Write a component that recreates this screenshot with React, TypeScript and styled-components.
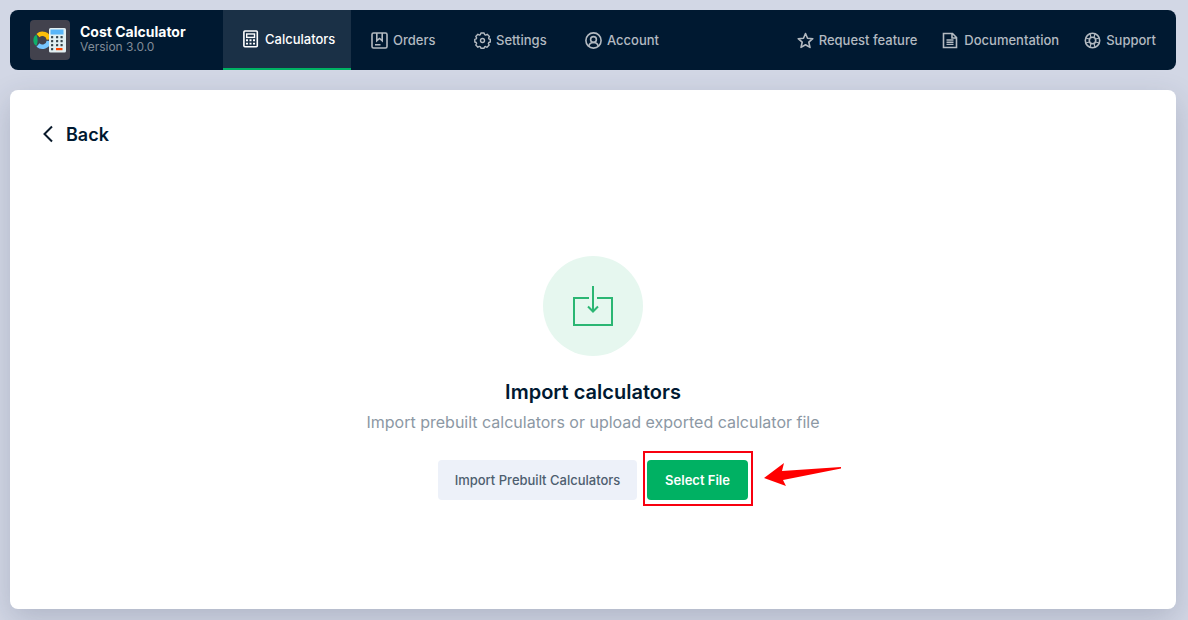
import React from "react";
import styled, { createGlobalStyle } from "styled-components";

const GlobalStyle = createGlobalStyle`
  * { box-sizing: border-box; }
  html { height: 100%; background: #d2d7e5; }
  body {
    min-height: 100%;
    margin: 0;
    font-family: Inter, "Liberation Sans", sans-serif;
    font-size: 13px;
    color: #001931;
  }
  #root { min-height: 100vh; display: flex; }
`;

const Page = styled.div`
  flex: 1;
  display: flex;
  flex-direction: column;
  gap: 20px;
  padding: 10px 12px 11px 10px;
`;

const Header = styled.header`
  display: flex;
  height: 60px;
  padding: 0 20px;
  background: #001931;
  border-radius: 8px;
`;

const Brand = styled.div`
  display: flex;
  align-items: center;
  gap: 10px;
  width: 193px;
`;

const BrandText = styled.div`
  display: flex;
  flex-direction: column;
  padding-bottom: 2px;
`;

const BrandName = styled.strong`
  font-size: 14px;
  line-height: 16px;
  font-weight: 700;
  color: #fff;
`;

const Version = styled.span`
  font-size: 12px;
  line-height: 14px;
  color: #808c98;
`;

const Tabs = styled.nav`
  display: flex;
`;

const NavLink = styled.a`
  display: flex;
  align-items: center;
  gap: 5px;
  font-weight: 500;
  line-height: 16px;
  text-decoration: none;
  white-space: nowrap;
  color: #b3bac1;
`;

const Tab = styled(NavLink)<{ $width: number; $active?: boolean }>`
  width: ${(p) => p.$width}px;
  padding-left: 20px;
  color: ${(p) => (p.$active ? "#fff" : "#b3bac1")};
  background: ${(p) => (p.$active ? "#1a3046" : "transparent")};
  border-bottom: ${(p) => (p.$active ? "2px solid #00b163" : "0")};
`;

const Links = styled.nav`
  display: flex;
  gap: 25px;
  margin-left: auto;
`;

const Card = styled.main`
  flex: 1;
  display: flex;
  flex-direction: column;
  padding: 32px;
  background: #fff;
  border-radius: 8px;
  box-shadow: 0 10px 30px rgba(40, 50, 80, 0.2);
`;

const BackButton = styled.button`
  align-self: flex-start;
  display: flex;
  align-items: center;
  gap: 12px;
  padding: 0;
  border: 0;
  background: none;
  font: 600 18px/26px Inter, "Liberation Sans", sans-serif;
  color: #001931;
`;

const ImportPanel = styled.section`
  flex: 1;
  display: flex;
  flex-direction: column;
  align-items: center;
  justify-content: center;
  padding-top: 30px;
`;

const Circle = styled.div`
  display: flex;
  align-items: center;
  justify-content: center;
  width: 100px;
  height: 100px;
  border-radius: 50%;
  background: #e6f7ef;
`;

const Title = styled.h1`
  margin: 24px 0 6px;
  font-size: 20px;
  line-height: 24px;
  font-weight: 600;
`;

const Subtitle = styled.p`
  margin: 0 0 26px;
  font-size: 16px;
  line-height: 24px;
  color: #8c98a4;
`;

const Actions = styled.div`
  display: flex;
  gap: 10px;
`;

const Button = styled.button<{ $primary?: boolean }>`
  height: 40px;
  min-width: ${(p) => (p.$primary ? "101px" : "199px")};
  padding: 0;
  border: 0;
  border-radius: 4px;
  font: ${(p) => (p.$primary ? 600 : 500)} 13px/16px Inter, "Liberation Sans", sans-serif;
  color: ${(p) => (p.$primary ? "#fff" : "#4d5e6f")};
  background: ${(p) => (p.$primary ? "#00b163" : "#edf1f9")};
`;

const Highlighted = styled.div`
  position: relative;
`;

const Frame = styled.span`
  position: absolute;
  inset: -9px -5px -6px -4px;
  border: 2px solid #f8000f;
  pointer-events: none;
`;

const Pointer = styled.svg`
  position: absolute;
  left: 116px;
  top: 2px;
  pointer-events: none;
`;

const icon = { fill: "none", stroke: "currentColor", strokeWidth: 1.6 };

const Logo = () => (
  <svg width="40" height="40" viewBox="0 0 40 40" aria-hidden="true">
    <rect width="40" height="40" rx="4" fill="#42424d" />
    <path d="M8 15.600A6.500 6.500 0 0 1 18.900 19.500" fill="none" stroke="#fcbf0a" strokeWidth="4.500" />
    <path d="M8 25A6.500 6.500 0 0 0 18.900 21" fill="none" stroke="#76c6ff" strokeWidth="4.500" />
    <path d="M6.500 14.800C2.300 16 2.300 24.500 6.500 25.800Q8.800 20.200 6.500 14.800Z" fill="#0fae69" />
    <rect x="19" y="8" width="17" height="24.500" rx="1.500" fill="#e1eff2" />
    <rect x="20.500" y="9.500" width="13" height="5" fill="#58b5f8" />
    <g fill="#37474f">
      {[17, 21, 25, 29].map((y) =>
        [21, 26, 30.500].map((x) =>
          y === 29 && x > 21 ? null : <rect key={`${x}-${y}`} x={x} y={y - 1} width="2.200" height="2.200" rx="0.500" />
        )
      )}
    </g>
    <rect x="26" y="28" width="6.500" height="2.200" fill="#ff4500" />
  </svg>
);

const CalculatorIcon = () => (
  <svg width="17" height="18" viewBox="0 0 17 18" {...icon} aria-hidden="true">
    <rect x="0.900" y="1" width="13.400" height="15.800" rx="1" />
    <rect x="3.700" y="4" width="7.800" height="3.400" strokeWidth="1.400" />
    <path d="M3 10.300h2m1.500 0h2m1.500 0h2M3 13.600h2m1.500 0h2m1.500 0h2" strokeWidth="1.900" />
  </svg>
);

const OrdersIcon = () => (
  <svg width="17" height="17" viewBox="0 0 17 17" {...icon} aria-hidden="true">
    <rect x="1" y="1" width="15" height="15" rx="1.500" />
    <path d="M5.800 1v7.700L8.500 6.500l2.700 2.200V1M4 12.700h5.500" />
  </svg>
);

const SettingsIcon = () => (
  <svg width="17" height="17" viewBox="0 0 17 17" {...icon} strokeWidth="1.400" strokeLinejoin="round" aria-hidden="true">
    <path d="M6.900 1h3.200l.5 1.600 1.100.5 1.500-.8 2.200 2.300-.8 1.400.4 1 1.300.3v2.700l-1.500.5-.4 1.100.8 1.500-2.200 2.200-1.500-.8-1 .4-.4 1.300H6.900l-.5-1.400-1-.4-1.500.8-2.100-2.200.8-1.500-.4-1L.8 10V7.300l1.400-.4.4-1-.8-1.400 2.100-2.200 1.500.8 1-.5z" />
    <circle cx="8.500" cy="8.500" r="2" />
  </svg>
);

const AccountIcon = () => (
  <svg width="17" height="17" viewBox="0 0 17 17" {...icon} aria-hidden="true">
    <circle cx="8.500" cy="8.500" r="7.600" />
    <circle cx="8.500" cy="7.500" r="2.900" />
    <path d="M3.800 14c.6-2.300 2.300-3.500 4.700-3.500s4.100 1.200 4.700 3.500" />
  </svg>
);

const StarIcon = () => (
  <svg width="17" height="17" viewBox="0 0 17 17" {...icon} strokeLinejoin="round" aria-hidden="true">
    <path d="M8.500 1.500l2 4.700 5.300.5-4 3.500 1.200 5.200-4.500-2.700L4 15.400l1.200-5.200-4-3.500 5.300-.5z" />
  </svg>
);

const DocumentIcon = () => (
  <svg width="17" height="17" viewBox="0 0 17 17" {...icon} aria-hidden="true">
    <path d="M1.500 1.500h9L14.500 5.500v10h-13zM10 1.500V6h4.500" />
    <path d="M4.500 8h7M4.500 10.200h7M4.500 12.400h7" strokeWidth="1.400" />
  </svg>
);

const SupportIcon = () => (
  <svg width="17" height="17" viewBox="0 0 17 17" {...icon} aria-hidden="true">
    <circle cx="8.500" cy="8.500" r="7.200" />
    <circle cx="8.500" cy="8.500" r="3.200" />
    <path d="M6 1.700l1 3.800M11 1.700l-1 3.800M6 15.300l1-3.800M11 15.300l-1-3.800M1.700 6l3.800 1M1.700 11l3.800-1M15.300 6l-3.800 1M15.300 11l-3.800-1" strokeWidth="1.200" />
  </svg>
);

const BackIcon = () => (
  <svg width="12" height="20" viewBox="0 0 12 20" fill="none" stroke="#0a1a2b" strokeWidth="2" aria-hidden="true">
    <path d="M10 1.500L2.500 9l7.500 7.500" />
  </svg>
);

const ImportIcon = () => (
  <svg width="42" height="42" viewBox="0 0 42 42" fill="none" stroke="#2bb673" strokeWidth="2" aria-hidden="true">
    <path d="M17 13H2v27h38V13H25M21 1v25M16 21.500l5 5 5-5" />
  </svg>
);

export default function App() {
  return (
    <>
      <GlobalStyle />
      <Page>
        <Header>
          <Brand>
            <Logo />
            <BrandText>
              <BrandName>Cost Calculator</BrandName>
              <Version>Version 3.0.0</Version>
            </BrandText>
          </Brand>
          <Tabs aria-label="Main">
            <Tab href="#calculators" $width={128} $active aria-current="page"><CalculatorIcon />Calculators</Tab>
            <Tab href="#orders" $width={103}><OrdersIcon />Orders</Tab>
            <Tab href="#settings" $width={111}><SettingsIcon />Settings</Tab>
            <Tab href="#account" $width={112}><AccountIcon />Account</Tab>
          </Tabs>
          <Links aria-label="Help">
            <NavLink href="#request"><StarIcon />Request feature</NavLink>
            <NavLink href="#documentation"><DocumentIcon />Documentation</NavLink>
            <NavLink href="#support"><SupportIcon />Support</NavLink>
          </Links>
        </Header>
        <Card>
          <BackButton type="button"><BackIcon />Back</BackButton>
          <ImportPanel>
            <Circle><ImportIcon /></Circle>
            <Title>Import calculators</Title>
            <Subtitle>Import prebuilt calculators or upload exported calculator file</Subtitle>
            <Actions>
              <Button type="button">Import Prebuilt Calculators</Button>
              <Highlighted>
                <Button type="button" $primary>Select File</Button>
                <Frame />
                <Pointer width="80" height="28" viewBox="0 0 80 28" aria-hidden="true">
                  <path d="M1 16L21 1l-2 8 59-4v1.500L20 18l3 6z" fill="#ff0000" />
                </Pointer>
              </Highlighted>
            </Actions>
          </ImportPanel>
        </Card>
      </Page>
    </>
  );
}
